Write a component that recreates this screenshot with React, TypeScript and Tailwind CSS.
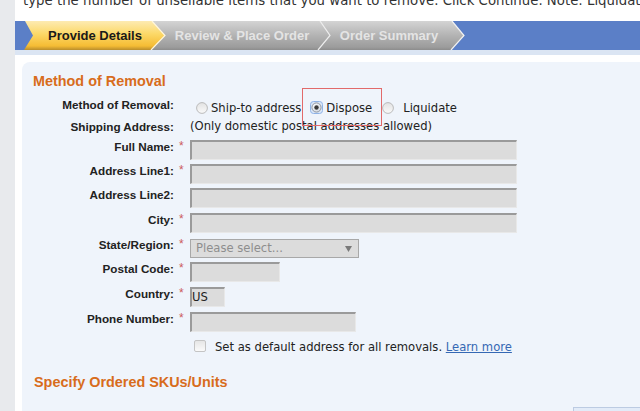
import React from "react";

const AR = "font-['Liberation_Sans',Arial,sans-serif]";
const VD = "font-['DejaVu_Sans',Verdana,sans-serif]";

function Radio({ checked }: { checked?: boolean }) {
  if (checked) {
    return (
      <svg width="13" height="13" viewBox="0 0 13 13" className="shrink-0">
        <defs>
          <radialGradient id="rc" cx="0.4" cy="0.35" r="0.7">
            <stop offset="0" stopColor="#ffffff" />
            <stop offset="1" stopColor="#cfd6df" />
          </radialGradient>
        </defs>
        <rect x="0.5" y="0.5" width="12" height="12" rx="3" fill="#dbe8fa" stroke="#8fb3e6" />
        <circle cx="6.5" cy="6.5" r="4.6" fill="url(#rc)" stroke="#8a8f96" strokeWidth="0.9" />
        <circle cx="6.5" cy="6.5" r="2.2" fill="#3a3a3a" />
      </svg>
    );
  }
  return (
    <svg width="12" height="12" viewBox="0 0 12 12" className="shrink-0">
      <defs>
        <linearGradient id="ru" x1="0" y1="0" x2="0" y2="1">
          <stop offset="0" stopColor="#e2e2e2" />
          <stop offset="1" stopColor="#fafafa" />
        </linearGradient>
      </defs>
      <circle cx="6" cy="6" r="5.4" fill="url(#ru)" stroke="#b4b4b4" strokeWidth="0.9" />
    </svg>
  );
}

function Label({ text, req, h, children }: { text: string; req?: boolean; h: string; children?: React.ReactNode }) {
  return (
    <div className={`flex ${h}`}>
      <div className={`w-[152px] shrink-0 text-right ${AR} text-[11.7px] leading-[13px] font-bold text-[#222]`}>{text}</div>
      <div className={`w-[16px] shrink-0 pl-[5px] ${AR} text-[12px] leading-[13px] text-[#cc5a5c]`}>{req ? "*" : ""}</div>
      <div className="flex-1">{children}</div>
    </div>
  );
}

const inputCls =
  "h-[20px] bg-[#dcdcdc] border-t-2 border-l-2 border-r border-b border-t-[#9a9a9a] border-l-[#9a9a9a] border-r-[#e8e8e8] border-b-[#e8e8e8]";

export default function App() {
  return (
    <div className="w-[640px] h-[411px] overflow-hidden flex bg-white">
      <div className="w-[15px] shrink-0 bg-[#e8eaed]" />
      <div className="flex-1 flex flex-col min-w-0">
        <div className="h-[21px] shrink-0 overflow-hidden">
          <div className={`-mt-[7px] pl-[8px] whitespace-nowrap ${VD} text-[13.3px] leading-[16px] text-[#333]`}>
            type the number of unsellable items that you want to remove. Click Continue. Note: Liquidate
          </div>
        </div>
        <div className="relative h-[29px] shrink-0">
          <svg width="625" height="29" className="absolute left-0 top-0">
            <defs>
              <linearGradient id="yg" x1="0" y1="0" x2="0" y2="1">
                <stop offset="0" stopColor="#fdebb2" />
                <stop offset="0.45" stopColor="#fcd867" />
                <stop offset="0.86" stopColor="#f5bc34" />
                <stop offset="1" stopColor="#b98d2c" />
              </linearGradient>
              <linearGradient id="gg" x1="0" y1="0" x2="0" y2="1">
                <stop offset="0" stopColor="#d4d4d4" />
                <stop offset="0.5" stopColor="#b3b3b3" />
                <stop offset="0.9" stopColor="#9c9c9c" />
                <stop offset="1" stopColor="#8c8c8c" />
              </linearGradient>
            </defs>
            <rect width="625" height="29" fill="#5b7fc7" />
            <polygon points="120,0 437,0 449,14.5 436,29 120,29" fill="url(#gg)" />
            <polyline points="437,0 449,14.5 436,29" stroke="#f2f2f2" strokeWidth="1.2" fill="none" />
            <polyline points="305,0 315,14.5 303,29" stroke="#eeeeee" strokeWidth="1.2" fill="none" />
            <polygon points="10,0 137,0 150,14.5 136,29 9,29 18,14.5" fill="url(#yg)" />
            <polyline points="137,0 150,14.5 136,29" stroke="#fff6dc" strokeWidth="1.2" fill="none" />
          </svg>
          <div className={`relative flex h-[29px] items-center ${AR} text-[13px] font-bold`}>
            <div className="w-[154px] pl-[6px] text-center text-[#1a1a1a]">Provide Details</div>
            <div className="w-[146px] text-center text-[#e4e4e4]">Review &amp; Place Order</div>
            <div className="w-[148px] text-center text-[#e4e4e4]">Order Summary</div>
          </div>
        </div>
        <div className="h-[5px] shrink-0 bg-[#dbe5f3]" />
        <div className="h-[7px] shrink-0" />
        <div className="relative ml-[7px] shrink-0 rounded-tl-[8px] bg-[#eff4fb] pt-[12px] h-[400px]">
          <div className={`pl-[11px] h-[15px] ${AR} text-[14.4px] leading-[15px] font-bold text-[#d86c1c]`}>Method of Removal</div>
          <div className="mt-[9px]">
            <Label text="Method of Removal:" h="h-[22px]">
              <div className={`flex items-center h-[13px] mt-[4px] ${VD} text-[11.6px] leading-[13px] text-[#222]`}>
                <div className="ml-[6px] -mt-[2px]"><Radio /></div>
                <span className="ml-[3px]">Ship-to address</span>
                <div className="ml-[9px] -mt-[2px]"><Radio checked /></div>
                <span className="ml-[3px]">Dispose</span>
                <div className="ml-[10px] -mt-[2px]"><Radio /></div>
                <span className="ml-[9px]">Liquidate</span>
              </div>
            </Label>
            <Label text="Shipping Address:" h="h-[20px]">
              <div className={`${VD} text-[11.6px] leading-[13px] text-[#222]`}>(Only domestic postal addresses allowed)</div>
            </Label>
            <Label text="Full Name:" req h="h-[24px]">
              <div className={`${inputCls} w-[327px]`} />
            </Label>
            <Label text="Address Line1:" req h="h-[24px]">
              <div className={`${inputCls} w-[327px]`} />
            </Label>
            <Label text="Address Line2:" h="h-[25px]">
              <div className={`${inputCls} w-[327px]`} />
            </Label>
            <Label text="City:" req h="h-[25px]">
              <div className={`${inputCls} w-[327px]`} />
            </Label>
            <Label text="State/Region:" req h="h-[24px]">
              <div className="mt-[1px] flex h-[19px] w-[169px] items-center justify-between border border-[#a8a8a8] bg-[#dcdcdc] pl-[5px] pr-[6px]">
                <span className={`${VD} text-[11.6px] text-[#8e8e8e]`}>Please select...</span>
                <svg width="7" height="6" viewBox="0 0 7 6"><polygon points="0,0 7,0 3.5,6" fill="#7a7a7a" /></svg>
              </div>
            </Label>
            <Label text="Postal Code:" req h="h-[25px]">
              <div className={`${inputCls} w-[90px]`} />
            </Label>
            <Label text="Country:" req h="h-[25px]">
              <div className={`${inputCls} w-[35px] flex items-center ${VD} text-[11.6px] text-[#222]`}>US</div>
            </Label>
            <Label text="Phone Number:" req h="h-[20px]">
              <div className={`${inputCls} w-[166px]`} />
            </Label>
            <div className="mt-[7px] flex pl-[172px]">
              <div className="mt-[1px] h-[12px] w-[12px] rounded-[2px] border border-[#c4c4c4] bg-gradient-to-b from-[#e6e6e6] to-[#fafafa]" />
              <div className={`ml-[9px] mt-[2px] ${VD} text-[11.6px] leading-[13px] text-[#222]`}>
                Set as default address for all removals.{" "}
                <span className="text-[#3568b4] underline">Learn more</span>
              </div>
            </div>
          </div>
          <div className={`mt-[21px] pl-[12px] h-[15px] ${AR} text-[14.4px] leading-[15px] font-bold text-[#d86c1c]`}>Specify Ordered SKUs/Units</div>
          <div className="mt-[17px] ml-[551px] h-[12px] w-[80px] border border-[#bccbe2] bg-[#e2ebf8]" />
          <div className="absolute left-[280px] top-[26px] h-[38px] w-[80px] border border-[#e26a6a]" />
        </div>
      </div>
    </div>
  );
}
